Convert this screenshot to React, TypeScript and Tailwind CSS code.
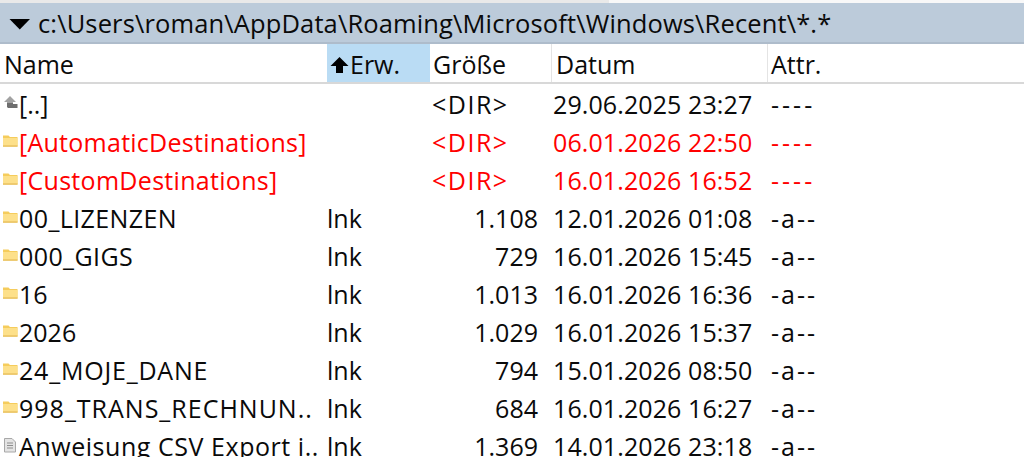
const rows = [
  { icon: 'up', name: '[..]', ext: '', size: '<DIR>', date: '29.06.2025 23:27', attr: '----', track: 'tracking-[0px]' },
  { icon: 'folder', name: '[AutomaticDestinations]', ext: '', size: '<DIR>', date: '06.01.2026 22:50', attr: '----', red: true, track: 'tracking-[0.26px]' },
  { icon: 'folder', name: '[CustomDestinations]', ext: '', size: '<DIR>', date: '16.01.2026 16:52', attr: '----', red: true, track: 'tracking-[0.3px]' },
  { icon: 'folder', name: '00_LIZENZEN', ext: 'lnk', size: '1.108', date: '12.01.2026 01:08', attr: '-a--', track: 'tracking-[0.4px]' },
  { icon: 'folder', name: '000_GIGS', ext: 'lnk', size: '729', date: '16.01.2026 15:45', attr: '-a--', track: 'tracking-[0.4px]' },
  { icon: 'folder', name: '16', ext: 'lnk', size: '1.013', date: '16.01.2026 16:36', attr: '-a--', track: 'tracking-[0px]' },
  { icon: 'folder', name: '2026', ext: 'lnk', size: '1.029', date: '16.01.2026 15:37', attr: '-a--', track: 'tracking-[0px]' },
  { icon: 'folder', name: '24_MOJE_DANE', ext: 'lnk', size: '794', date: '15.01.2026 08:50', attr: '-a--', track: 'tracking-[0.8px]' },
  { icon: 'folder', name: '998_TRANS_RECHNUN..', ext: 'lnk', size: '684', date: '16.01.2026 16:27', attr: '-a--', track: 'tracking-[1px]' },
  { icon: 'file', name: 'Anweisung CSV Export i..', ext: 'lnk', size: '1.369', date: '14.01.2026 23:18', attr: '-a--', track: 'tracking-[0.55px]' },
];

function RowIcon({ type }: { type: string }) {
  if (type === 'up') {
    return (
      <svg width="16" height="16" viewBox="0 0 16 16" className="mb-[3px] shrink-0">
        <path d="M8 1 L14 7 H11 V9 H5 V7 H2 Z" fill="#a2a2a2" />
        <path d="M5 8 H11 V9 H15.5 V13 H6 L5 12 Z" fill="#6e6e6e" />
      </svg>
    );
  }
  if (type === 'file') {
    return (
      <svg width="16" height="16" viewBox="0 0 16 16" className="mb-[3px] shrink-0">
        <path d="M2.5 1.5 H10 L13.5 5 V15 H2.5 Z" fill="#e4e4e4" stroke="#a8a8a8" />
        <path d="M5 6 H11 M5 8.5 H11 M5 11 H11" stroke="#8e8e8e" />
      </svg>
    );
  }
  return (
    <svg width="16" height="16" viewBox="0 0 16 16" className="mb-[3px] shrink-0">
      <path d="M1 2.5 H6.5 L8 4 H15.5 V13.5 H1 Z" fill="#f5cc5c" />
      <path d="M1 5 H15.5 V13.5 H1 Z" fill="#fde08a" />
      <path d="M1 13 H15.5" stroke="#e0b44e" />
    </svg>
  );
}

export default function App() {
  return (
    <div className="h-[457px] w-[1024px] overflow-hidden bg-white font-['Open_Sans','Noto_Sans',sans-serif] text-[#0a0a0a]">
      <div className="flex h-[3px]">
        <div className="w-[609px] bg-[#e9e9e9]" />
        <div className="flex-1 bg-[#f8f8f8]" />
      </div>
      <div className="flex h-[41px] items-center border-b-2 border-[#aebccb] bg-[#bccbda] pl-[9px]">
        <svg width="22" height="12" viewBox="0 0 22 12" className="mr-[7px] mt-[3px] shrink-0">
          <path d="M0.5 1 H21 L10.75 11.5 Z" fill="#000" />
        </svg>
        <span className="mt-[2px] text-[25.5px] leading-none tracking-[0.13px]">c:\Users\roman\AppData\Roaming\Microsoft\Windows\Recent\*.*</span>
      </div>
      <div className="flex h-[40px] border-b-2 border-[#d8d8d8] pt-[3px] text-[25px] leading-none">
        <div className="flex w-[327px] items-center pl-[4px]">Name</div>
        <div className="-mt-[3px] flex w-[103px] items-center bg-[#badcf4] pl-[2px] pt-[3px]">
          <svg width="21" height="18" viewBox="0 0 21 18" className="shrink-0">
            <path d="M10.5 1 L19.5 10 H14 V17 H7 V10 H1.5 Z" fill="#000" />
          </svg>
          Erw.
        </div>
        <div className="-mt-[3px] flex w-[122px] items-center border-r border-[#e4e4e4] pl-[3px] pt-[3px]">Größe</div>
        <div className="-mt-[3px] flex w-[216px] items-center border-r border-[#e4e4e4] pl-[4px] pt-[3px]">Datum</div>
        <div className="flex flex-1 items-center pl-[3px]">Attr.</div>
      </div>
      <div className="pt-[1px] text-[25px]">
        {rows.map((row) => (
          <div key={row.name} className={`flex h-[38px] items-center leading-none ${row.red ? 'text-[#ff0000]' : ''}`}>
            <div className="flex w-[327px] items-center gap-[1px] pl-[2px]">
              <RowIcon type={row.icon} />
              <span className={`whitespace-nowrap ${row.track}`}>{row.name}</span>
            </div>
            <div className="w-[103px]">{row.ext}</div>
            <div className={`w-[108px] whitespace-nowrap ${row.size === '<DIR>' ? 'pl-[2px] tracking-[1.5px]' : 'text-right'}`}>{row.size}</div>
            <div className="w-[230px] whitespace-nowrap pl-[15px] tracking-[0.1px]">{row.date}</div>
            <div className={`flex-1 pl-[3px] ${row.attr === '----' ? 'tracking-[3px]' : 'tracking-[2px]'}`}>{row.attr}</div>
          </div>
        ))}
      </div>
    </div>
  );
}
